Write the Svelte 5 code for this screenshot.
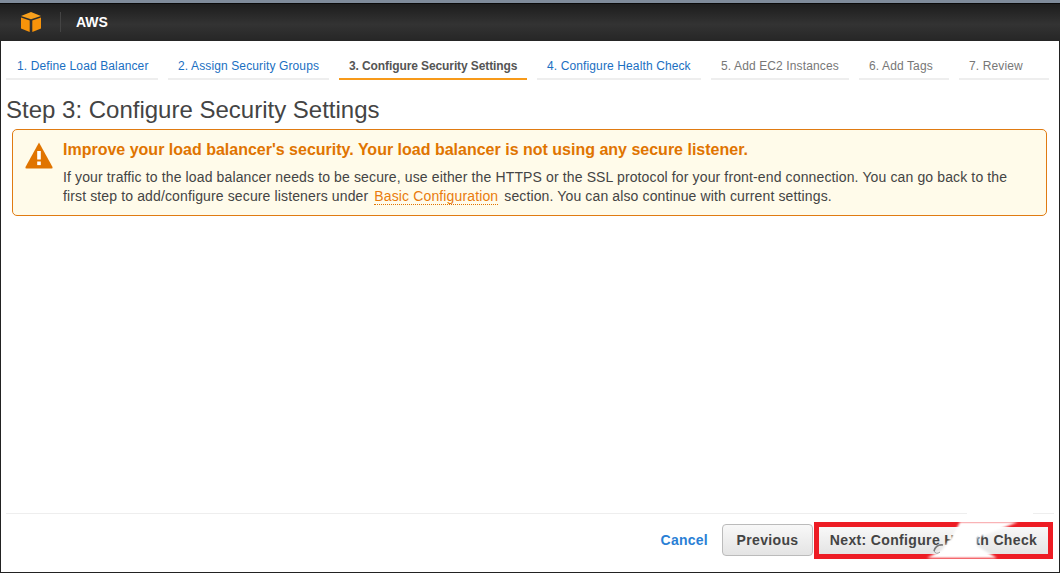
<script lang="ts">
  const steps = [
    { label: '1. Define Load Balancer', state: 'done', width: 152 },
    { label: '2. Assign Security Groups', state: 'done', width: 161 },
    { label: '3. Configure Security Settings', state: 'active', width: 188 },
    { label: '4. Configure Health Check', state: 'done', width: 164 },
    { label: '5. Add EC2 Instances', state: 'todo', width: 138 },
    { label: '6. Add Tags', state: 'todo', width: 90 },
    { label: '7. Review', state: 'todo', width: 90 }
  ];
</script>

<div class="frame">
  <header class="topbar">
    <svg class="cube" width="20" height="20" viewBox="0 0 20 20">
      <path d="M10 0 L20 4 L10 7.300 L0 4 Z" fill="#f8a01c" />
      <path d="M0 5.500 L8.700 8.500 L8.700 20 L0 16.500 Z" fill="#f7930a" />
      <path d="M20 5.500 L11.300 8.500 L11.300 20 L20 16.500 Z" fill="#f7930a" />
    </svg>
    <span class="divider"></span>
    <span class="brand">AWS</span>
  </header>

  <main class="content">
    <nav class="steps">
      {#each steps as s}
        <div class="step {s.state}" style="width: {s.width}px">{s.label}</div>
      {/each}
    </nav>

    <h1>Step 3: Configure Security Settings</h1>

    <section class="alert">
      <svg class="warn" width="28" height="28" viewBox="0 0 28 28">
        <path d="M14 0.500 L27.500 25 Q28 26.500 26.500 26.500 L1.500 26.500 Q0 26.500 0.500 25 Z" fill="#e07400" />
        <rect x="12.200" y="9" width="3.600" height="8.500" fill="#fff" />
        <rect x="12.200" y="19.500" width="3.600" height="3.600" fill="#fff" />
      </svg>
      <div class="alert-body">
        <h2>Improve your load balancer's security. Your load balancer is not using any secure listener.</h2>
        <p>
          If your traffic to the load balancer needs to be secure, use either the HTTPS or the SSL protocol for your front-end connection. You can go back to the<br />
          first step to add/configure secure listeners under <a href="#basic">Basic Configuration</a> section. You can also continue with current settings.
        </p>
      </div>
    </section>

    <div class="spacer"></div>

    <footer class="actions">
      <span class="cancel">Cancel</span>
      <button class="btn prev">Previous</button>
      <div class="highlight">
        <button class="btn next">Next: Configure Health Check</button>
        <!-- the white scribble that was painted over the screenshot -->
        <svg class="smudge" width="150" height="62" viewBox="0 0 150 62">
          <defs>
            <filter id="soft"><feGaussianBlur stdDeviation="1" /></filter>
          </defs>
          <rect x="67" y="5" width="66" height="12" fill="#fff" />
          <polygon points="60,17 118,17 98,25 77,33 77,41 97,53 27,53 42,45 53,30" fill="#fff" filter="url(#soft)" />
          <path d="M34 46 Q36 39 43 40" fill="none" stroke="#777" stroke-width="1.500" />
          <path d="M34 46 Q36 50 40 47" fill="none" stroke="#999" stroke-width="1" />
        </svg>
      </div>
    </footer>
  </main>
</div>

<style>
  :global(body) {
    margin: 0;
    background: #fff;
  }

  .frame {
    width: 1060px;
    height: 573px;
    box-sizing: border-box;
    display: flex;
    flex-direction: column;
    border-top: 3px solid #7f8b9a;
    font-family: "Liberation Sans", Arial, sans-serif;
    overflow: hidden;
  }

  .topbar {
    height: 38px;
    flex: none;
    box-sizing: border-box;
    display: flex;
    align-items: center;
    padding: 0 0 2px 21px;
    background: linear-gradient(#1d1d1d, #333 55%, #262626);
    border-top: 1px solid #0a0a0a;
  }

  .cube {
    flex: none;
  }

  .divider {
    width: 1px;
    height: 20px;
    background: #444;
    margin-left: 19px;
  }

  .brand {
    margin-left: 15px;
    color: #fff;
    font-size: 14px;
    font-weight: bold;
  }

  .content {
    flex: 1;
    display: flex;
    flex-direction: column;
    min-height: 0;
    border-left: 1px solid #222;
    border-right: 1px solid #222;
    border-bottom: 1px solid #222;
    padding: 0 5px;
  }

  .steps {
    display: flex;
    gap: 10px;
    margin-top: 15px;
  }

  .step {
    box-sizing: border-box;
    height: 24px;
    flex: none;
    padding: 2px 0 0 10px;
    font-size: 12px;
    line-height: 16px;
    letter-spacing: 0.12px;
    white-space: nowrap;
    border-bottom: 2px solid #eee;
  }

  .step:first-child {
    padding-left: 11px;
  }

  .done {
    color: #1a6fc2;
  }

  .todo {
    color: #777;
  }

  .active {
    color: #555;
    font-weight: bold;
    letter-spacing: -0.1px;
    border-bottom-color: #f79a1a;
  }

  h1 {
    margin: 15px 0 0;
    font-size: 24px;
    font-weight: normal;
    line-height: 30px;
    color: #444;
  }

  .alert {
    margin: 4px 7px 0 6px;
    height: 87px;
    box-sizing: border-box;
    display: flex;
    background: #fffbea;
    border: 1px solid #e07b12;
    border-radius: 5px;
    padding: 10px 10px 0 12px;
  }

  .warn {
    flex: none;
    margin-top: 2px;
  }

  .alert-body {
    margin-left: 10px;
    min-width: 0;
  }

  h2 {
    margin: 0;
    font-size: 16px;
    line-height: 20px;
    color: #e07400;
    font-weight: bold;
    white-space: nowrap;
  }

  p {
    margin: 8px 0 0;
    font-size: 14px;
    line-height: 19px;
    letter-spacing: 0.13px;
    color: #444;
    white-space: nowrap;
  }

  p a {
    color: #e97b0c;
    text-decoration: none;
    border-bottom: 1px dotted #e07400;
    margin: 0 2px;
  }

  .spacer {
    flex: 1;
  }

  .actions {
    height: 59px;
    flex: none;
    border-top: 1px solid #eee;
    display: flex;
    align-items: center;
    justify-content: flex-end;
    padding: 0 1px 6px 0;
    box-sizing: border-box;
  }

  .cancel {
    color: #2a7fd5;
    font-size: 14px;
    font-weight: bold;
    letter-spacing: 0.25px;
    margin-right: 14px;
  }

  .btn {
    font: bold 14px "Liberation Sans", Arial, sans-serif;
    letter-spacing: 0.35px;
    color: #444;
    background: linear-gradient(#f8f8f8, #e4e4e4);
    border: 1px solid #bbb;
    border-radius: 4px;
  }

  .prev {
    width: 91px;
    height: 32px;
    padding: 0;
  }

  .highlight {
    position: relative;
    margin-left: 1px;
    width: 239px;
    height: 37px;
    box-sizing: border-box;
    border: 5px solid #ed1c24;
    display: flex;
  }

  .next {
    border: none;
    border-radius: 0;
    width: 100%;
    height: 100%;
    padding: 0;
  }

  .smudge {
    position: absolute;
    left: 81px;
    top: -22px;
    pointer-events: none;
  }
</style>
